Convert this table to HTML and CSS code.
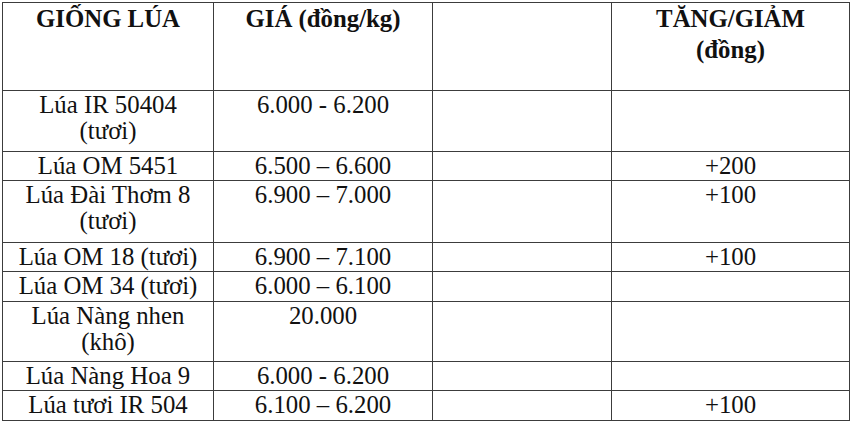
FILE: index.html
```html
<!DOCTYPE html>
<html lang="vi">
<head>
<meta charset="utf-8">
<title>Giá lúa</title>
<link rel="stylesheet" href="styles.css">
</head>
<body>
<table class="price-table">
  <colgroup>
    <col class="c1"><col class="c2"><col class="c3"><col class="c4">
  </colgroup>
  <thead>
    <tr class="r-head">
      <th>GIỐNG LÚA</th>
      <th>GIÁ (đồng/kg)</th>
      <th></th>
      <th>TĂNG/GIẢM<br>(đồng)</th>
    </tr>
  </thead>
  <tbody>
    <tr class="r-61"><td>Lúa IR 50404<br>(tươi)</td><td>6.000 - 6.200</td><td></td><td></td></tr>
    <tr class="r-29"><td>Lúa OM 5451</td><td>6.500 – 6.600</td><td></td><td>+200</td></tr>
    <tr class="r-62"><td>Lúa Đài Thơm 8<br>(tươi)</td><td>6.900 – 7.000</td><td></td><td>+100</td></tr>
    <tr class="r-29"><td>Lúa OM 18 (tươi)</td><td>6.900 – 7.100</td><td></td><td>+100</td></tr>
    <tr class="r-30"><td>Lúa OM 34 (tươi)</td><td>6.000 – 6.100</td><td></td><td></td></tr>
    <tr class="r-60"><td>Lúa Nàng nhen<br>(khô)</td><td>20.000</td><td></td><td></td></tr>
    <tr class="r-29"><td>Lúa Nàng Hoa 9</td><td>6.000 - 6.200</td><td></td><td></td></tr>
    <tr class="r-30"><td>Lúa tươi IR 504</td><td>6.100 – 6.200</td><td></td><td>+100</td></tr>
  </tbody>
</table>
</body>
</html>
```

FILE: styles.css
```css
html, body {
  margin: 0;
  padding: 0;
  background: #ffffff;
}

body {
  padding: 2px 0 0 2px;
}

.price-table {
  border-collapse: collapse;
  table-layout: fixed;
  width: 847px;
  font-family: "Liberation Serif", "Times New Roman", serif;
  font-size: 24.8px;
  color: #111111;
}

.c1 { width: 211px; }
.c2 { width: 219px; }
.c3 { width: 179px; }
.c4 { width: 238px; }

.price-table th,
.price-table td {
  border: 1px solid #3c3c3c;
  text-align: center;
  vertical-align: top;
  padding: 0;
  line-height: 27px;
  overflow: hidden;
}

.price-table td {
  padding-top: 1px;
  line-height: 26px;
}

.price-table th {
  font-weight: bold;
  line-height: 31px;
}

.r-head { height: 88px; }
.r-62 { height: 62px; }
.r-61 { height: 61px; }
.r-60 { height: 60px; }
.r-30 { height: 30px; }
.r-29 { height: 29px; }
```
